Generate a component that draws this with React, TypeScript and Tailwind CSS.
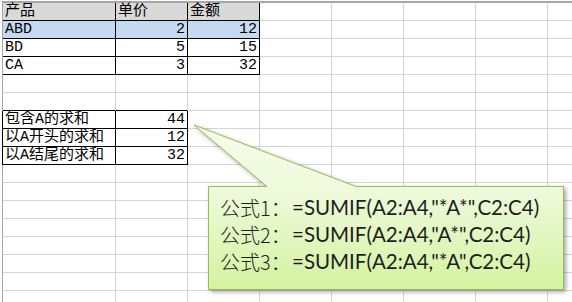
import React from 'react';

type CellDef = {
  text?: string;
  right?: boolean;
  bg?: string;
  dark?: boolean; // black right/bottom border
  darkBottomOnly?: boolean;
};

const colWidths = ['w-[113px]', 'w-[72px]', 'w-[72px]', 'w-[72px]', 'w-[72px]', 'w-[72px]', 'w-[72px]', 'w-[72px]'];

const sheet: Record<number, CellDef[]> = {
  0: [
    { text: '产品', bg: 'bg-[#d9d9d9]', dark: true },
    { text: '单价', bg: 'bg-[#d9d9d9]', dark: true },
    { text: '金额', bg: 'bg-[#d9d9d9]', dark: true },
  ],
  1: [
    { text: 'ABD', bg: 'bg-[#c5d9f1]', dark: true },
    { text: '2', right: true, bg: 'bg-[#c5d9f1]', dark: true },
    { text: '12', right: true, bg: 'bg-[#c5d9f1]', dark: true },
  ],
  2: [
    { text: 'BD', dark: true },
    { text: '5', right: true, dark: true },
    { text: '15', right: true, dark: true },
  ],
  3: [
    { text: 'CA', dark: true },
    { text: '3', right: true, dark: true },
    { text: '32', right: true, dark: true },
  ],
  5: [{ darkBottomOnly: true }, { darkBottomOnly: true }],
  6: [
    { text: '包含A的求和', dark: true },
    { text: '44', right: true, dark: true },
  ],
  7: [
    { text: '以A开头的求和', dark: true },
    { text: '12', right: true, dark: true },
  ],
  8: [
    { text: '以A结尾的求和', dark: true },
    { text: '32', right: true, dark: true },
  ],
};

function Cell({ def, width }: { def?: CellDef; width: string }) {
  const rightBorder = def?.dark ? 'border-r-black' : 'border-r-[#d4d4d4]';
  const bottomBorder = def?.dark || def?.darkBottomOnly ? 'border-b-black' : 'border-b-[#d4d4d4]';
  return (
    <div
      className={`${width} h-[18px] shrink-0 border-r border-b ${rightBorder} ${bottomBorder} ${def?.bg ?? 'bg-white'} flex items-end px-[2px] text-[15px] leading-[17px] text-black ${
        def?.right ? 'justify-end' : 'justify-start'
      }`}
      style={{ fontFamily: "'Liberation Mono', 'Noto Sans CJK SC', monospace" }}
    >
      <span className="whitespace-nowrap">{def?.text}</span>
    </div>
  );
}

const formulas = [
  { label: '公式1：', body: '=SUMIF(A2:A4,"*A*",C2:C4)' },
  { label: '公式2：', body: '=SUMIF(A2:A4,"A*",C2:C4)' },
  { label: '公式3：', body: '=SUMIF(A2:A4,"*A",C2:C4)' },
];

export default function App() {
  return (
    <div className="relative w-[572px] h-[302px] overflow-hidden bg-white pt-[1px] pl-[2px]">
      {/* Sheet grid */}
      <div className="border-t-2 border-t-[#a6a6a6] flex flex-col">
        {Array.from({ length: 17 }).map((_, r) => {
          const leftDark = r >= 6 && r <= 8;
          return (
            <div
              key={r}
              className={`flex border-l ${leftDark ? 'border-l-black' : 'border-l-[#a6a6a6]'}`}
            >
              {colWidths.map((w, c) => (
                <Cell key={c} def={sheet[r]?.[c]} width={w} />
              ))}
            </div>
          );
        })}
      </div>

      {/* Callout bubble */}
      <svg
        className="absolute left-0 top-0 pointer-events-none drop-shadow-[2px_2px_2px_rgba(0,0,0,0.35)]"
        width="572"
        height="302"
        viewBox="0 0 572 302"
      >
        <defs>
          <linearGradient id="calloutFill" x1="0" y1="0" x2="0" y2="1">
            <stop offset="0" stopColor="#f6fdea" />
            <stop offset="0.4" stopColor="#eefadb" />
            <stop offset="1" stopColor="#d3f3a0" />
          </linearGradient>
        </defs>
        <path
          d="M208.5 186.5 L267 186.5 L194 125 L356 186.5 L563.5 186.5 L563.5 289.5 L208.5 289.5 Z"
          fill="url(#calloutFill)"
          stroke="#9bbb59"
          strokeWidth="1"
        />
      </svg>
      <div className="absolute left-[209px] top-[187px] w-[354px] h-[102px] pl-[11px] pt-[7px] flex flex-col">
        {formulas.map((f) => (
          <div key={f.label} className="flex items-center h-[27px] text-[20px] text-[#1e1e1e] whitespace-nowrap">
            <span
              className="w-[72px] shrink-0"
              style={{ fontFamily: "'Noto Sans CJK SC', sans-serif", fontWeight: 300 }}
            >
              {f.label}
            </span>
            <span
              className="text-[20.5px]"
              style={{ fontFamily: "Lato, 'Liberation Sans', sans-serif" }}
            >
              {f.body}
            </span>
          </div>
        ))}
      </div>
    </div>
  );
}
